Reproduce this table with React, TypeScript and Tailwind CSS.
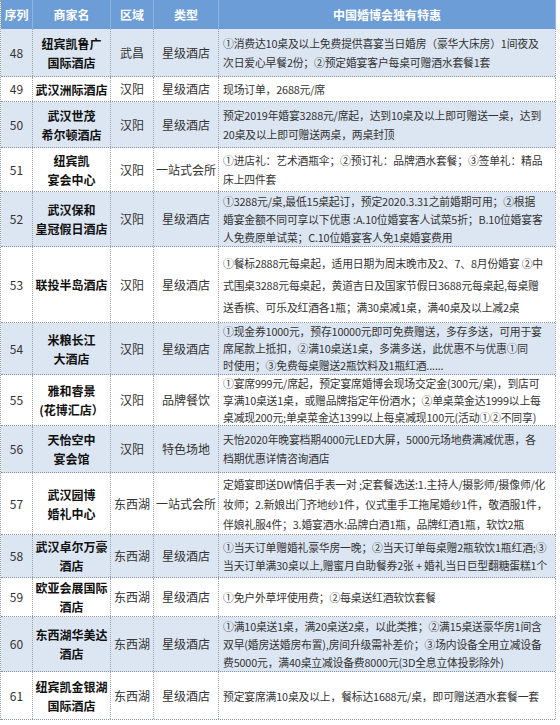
import React from "react";

type Row = {
  no: string;
  name: string[];
  area: string;
  type: string;
  lines: string[];
  h: string;
  lead: string;
  blue: boolean;
};

const rows: Row[] = [
  {
    no: "48",
    name: ["纽宾凯鲁广", "国际酒店"],
    area: "武昌",
    type: "星级酒店",
    lines: [
      "①消费达10桌及以上免费提供喜宴当日婚房（豪华大床房）1间夜及",
      "次日爱心早餐2份；②预定婚宴客户每桌可赠酒水套餐1套",
    ],
    h: "h-[48px]",
    lead: "leading-[19px]",
    blue: true,
  },
  {
    no: "49",
    name: ["武汉洲际酒店"],
    area: "汉阳",
    type: "星级酒店",
    lines: ["现场订单，2688元/席"],
    h: "h-[25px]",
    lead: "leading-[18px]",
    blue: false,
  },
  {
    no: "50",
    name: ["武汉世茂", "希尔顿酒店"],
    area: "汉阳",
    type: "星级酒店",
    lines: [
      "预定2019年婚宴3288元/席起，达到10桌及以上即可赠送一桌，达到",
      "20桌及以上即可赠送两桌，两桌封顶",
    ],
    h: "h-[46px]",
    lead: "leading-[19px]",
    blue: true,
  },
  {
    no: "51",
    name: ["纽宾凯", "宴会中心"],
    area: "汉阳",
    type: "一站式会所",
    lines: [
      "①进店礼：艺术酒瓶伞；②预订礼：品牌酒水套餐；③签单礼：精品",
      "床上四件套",
    ],
    h: "h-[44px]",
    lead: "leading-[19px]",
    blue: false,
  },
  {
    no: "52",
    name: ["武汉保和", "皇冠假日酒店"],
    area: "汉阳",
    type: "星级酒店",
    lines: [
      "①3288元/桌,最低15桌起订，预定2020.3.31之前婚期可用；②根据",
      "婚宴金额不同可享以下优惠 :A.10位婚宴客人试菜5折；B.10位婚宴客",
      "人免费原单试菜；C.10位婚宴客人免1桌婚宴费用",
    ],
    h: "h-[55px]",
    lead: "leading-[18px]",
    blue: true,
  },
  {
    no: "53",
    name: ["联投半岛酒店"],
    area: "汉阳",
    type: "星级酒店",
    lines: [
      "①餐标2888元每桌起，适用日期为周末晚市及2、7、8月份婚宴 ②中",
      "式围桌3288元每桌起，黄道吉日及国家节假日3688元每桌起,每桌赠",
      "送香槟、可乐及红酒各1瓶；满30桌减1桌，满40桌及以上减2桌",
    ],
    h: "h-[76px]",
    lead: "leading-[22px]",
    blue: false,
  },
  {
    no: "54",
    name: ["米粮长江", "大酒店"],
    area: "汉阳",
    type: "星级酒店",
    lines: [
      "①现金券1000元，预存10000元即可免费赠送，多存多送，可用于宴",
      "席尾款上抵扣，②满10桌送1桌，多满多送，此优惠不与优惠①同",
      "时使用；③免费每桌赠送2瓶饮料及1瓶红酒......",
    ],
    h: "h-[52px]",
    lead: "leading-[17px]",
    blue: true,
  },
  {
    no: "55",
    name: ["雅和睿景", "(花博汇店）"],
    area: "汉阳",
    type: "品牌餐饮",
    lines: [
      "①宴席999元/席起，预定宴席婚博会现场交定金(300元/桌)，到店可",
      "享满10桌送1桌，或赠品牌指定年份酒水；②单桌菜金达1999以上每",
      "桌减现200元;单桌菜金达1399以上每桌减现100元(活动①②不同享)",
    ],
    h: "h-[51px]",
    lead: "leading-[17px]",
    blue: false,
  },
  {
    no: "56",
    name: ["天怡空中", "宴会馆"],
    area: "汉阳",
    type: "特色场地",
    lines: [
      "天怡2020年晚宴档期4000元LED大屏，5000元场地费满减优惠，各",
      "档期优惠详情咨询酒店",
    ],
    h: "h-[47px]",
    lead: "leading-[19px]",
    blue: true,
  },
  {
    no: "57",
    name: ["武汉园博", "婚礼中心"],
    area: "东西湖",
    type: "一站式会所",
    lines: [
      "定婚宴即送DW情侣手表一对 ;定套餐选送:1.主持人/摄影师/摄像师/化",
      "妆师；2.新娘出门齐地纱1件，仪式重手工拖尾婚纱1件，敬酒服1件，",
      "伴娘礼服4件；3.婚宴酒水:品牌白酒1瓶，品牌红酒1瓶，软饮2瓶",
    ],
    h: "h-[62px]",
    lead: "leading-[20px]",
    blue: false,
  },
  {
    no: "58",
    name: ["武汉卓尔万豪", "酒店"],
    area: "东西湖",
    type: "星级酒店",
    lines: [
      "①当天订单赠婚礼豪华房一晚；②当天订单每桌赠2瓶软饮1瓶红酒;③",
      "当天订单满30桌以上,赠蜜月自助餐券2张 + 婚礼当日巨型翻糖蛋糕1个",
    ],
    h: "h-[43px]",
    lead: "leading-[18px]",
    blue: true,
  },
  {
    no: "59",
    name: ["欧亚会展国际", "酒店"],
    area: "东西湖",
    type: "星级酒店",
    lines: ["①免户外草坪使用费；②每桌送红酒软饮套餐"],
    h: "h-[39px]",
    lead: "leading-[18px]",
    blue: false,
  },
  {
    no: "60",
    name: ["东西湖华美达", "酒店"],
    area: "东西湖",
    type: "星级酒店",
    lines: [
      "①满10桌送1桌，满20桌送2桌，以此类推；②满15桌送豪华房1间含",
      "双早(婚房送婚房布置),房间升级需补差价；③场内设备全用立减设备",
      "费5000元，满40桌立减设备费8000元(3D全息立体投影除外)",
    ],
    h: "h-[55px]",
    lead: "leading-[18px]",
    blue: true,
  },
  {
    no: "61",
    name: ["纽宾凯金银湖", "国际酒店"],
    area: "东西湖",
    type: "星级酒店",
    lines: ["预定宴席满10桌及以上，餐标达1688元/桌，即可赠送酒水套餐一套"],
    h: "h-[48px]",
    lead: "leading-[18px]",
    blue: false,
  },
];

const font = {
  fontFamily: '"Microsoft YaHei", "Noto Sans CJK SC", "Noto Sans", sans-serif',
};

export default function App() {
  return (
    <div className="w-[560px] h-[725px] bg-white overflow-hidden" style={font}>
      <div className="w-[555px] border-l border-dotted border-[#9aa3ad]">
        <div className="grid grid-cols-[32px_78px_43px_65px_337px] h-[29px] bg-[#6c9dd6] text-white font-bold text-[12px]">
          <div className="flex items-center justify-center border-r border-[#8fb4e0]">序列</div>
          <div className="flex items-center justify-center border-r border-[#8fb4e0]">商家名</div>
          <div className="flex items-center justify-center border-r border-[#8fb4e0]">区域</div>
          <div className="flex items-center justify-center border-r border-[#8fb4e0]">类型</div>
          <div className="flex items-center justify-center border-r border-[#8fb4e0]">中国婚博会独有特惠</div>
        </div>
        {rows.map((r) => (
          <div
            key={r.no}
            className={`grid grid-cols-[32px_78px_43px_65px_337px] ${r.h} ${
              r.blue ? "bg-[#dce6f2]" : "bg-white"
            } border-b border-dotted border-[#8c949c] text-[#333]`}
          >
            <div className="flex items-center justify-center border-r border-dotted border-[#9aa3ad] text-[12px]">
              {r.no}
            </div>
            <div className="flex flex-col items-center justify-center border-r border-dotted border-[#9aa3ad] font-bold text-[12px] leading-[19px] text-[#111] whitespace-nowrap">
              {r.name.map((n) => (
                <div key={n}>{n}</div>
              ))}
            </div>
            <div className="flex items-center justify-center border-r border-dotted border-[#9aa3ad] text-[12px] whitespace-nowrap">
              {r.area}
            </div>
            <div className="flex items-center justify-center border-r border-dotted border-[#9aa3ad] text-[12px] whitespace-nowrap">
              {r.type}
            </div>
            <div
              className={`flex flex-col justify-center pl-[4px] border-r border-dotted border-[#9aa3ad] text-[10.8px] ${r.lead} whitespace-nowrap overflow-hidden tracking-[-0.15px]`}
            >
              {r.lines.map((l, i) => (
                <div key={i}>{l}</div>
              ))}
            </div>
          </div>
        ))}
      </div>
    </div>
  );
}
